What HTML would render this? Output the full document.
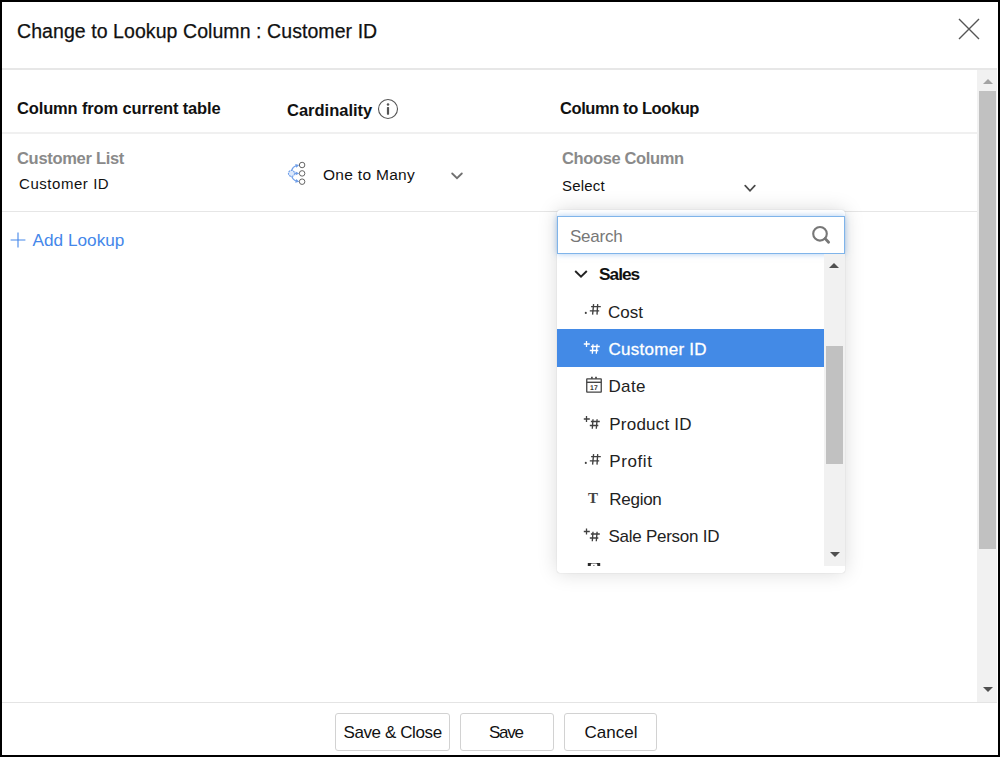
<!DOCTYPE html>
<html><head><meta charset="utf-8">
<style>
*{box-sizing:border-box;margin:0;padding:0}
html,body{width:1000px;height:757px;overflow:hidden;background:#fff;font-family:"Liberation Sans",sans-serif;color:#111}
.abs{position:absolute}
#frame{position:absolute;left:0;top:0;width:1000px;height:757px;border:2px solid #000;z-index:50;pointer-events:none}
.t{position:absolute;white-space:nowrap;line-height:1;transform-origin:0 50%}
.hl{position:absolute;background:#e9e9e9;height:1px}
.btn{position:absolute;top:713px;height:38px;border:1px solid #d2d2d2;border-radius:3px;background:#fff}
.item{position:absolute;left:608.5px;font-size:17px;color:#222;white-space:nowrap;line-height:1}
</style></head><body>
<div id="frame"></div>

<!-- header -->
<div class="t" id="title" style="left:17px;top:21.6px;font-size:19.5px;color:#111;letter-spacing:0.07px;-webkit-text-stroke:0.25px #111">Change to Lookup Column : Customer ID</div>
<svg class="abs" style="left:957px;top:17px" width="24" height="24" viewBox="0 0 24 24"><path d="M2 2 L22 22 M22 2 L2 22" stroke="#555" stroke-width="1.4" fill="none"/></svg>
<div class="hl" style="left:2px;top:68px;width:995px;height:2px;background:#e7e7e7"></div>

<!-- main scrollbar -->
<div class="abs" style="left:977px;top:70px;width:20px;height:632px;background:#f1f1f1"></div>
<div class="abs" style="left:979px;top:91px;width:17px;height:458px;background:#c1c1c1"></div>
<svg class="abs" style="left:982.5px;top:79px" width="10" height="6"><path d="M0 5 L5 0 L10 5 Z" fill="#a3a3a3"/></svg>
<svg class="abs" style="left:982.5px;top:687px" width="10" height="6"><path d="M0 0 L5 5 L10 0 Z" fill="#505050"/></svg>

<!-- column headers -->
<div class="t" id="h1" style="left:17px;top:100px;font-size:16.5px;font-weight:bold;color:#111;letter-spacing:-0.15px">Column from current table</div>
<div class="t" id="h2" style="left:287px;top:102px;font-size:16.5px;font-weight:bold;color:#111">Cardinality</div>
<svg class="abs" style="left:376px;top:97px" width="24" height="24" viewBox="0 0 24 24"><circle cx="12" cy="12" r="9.5" fill="none" stroke="#555" stroke-width="1.1"/><rect x="10.9" y="10.1" width="2.2" height="7.6" rx="0.6" fill="#555"/><circle cx="12" cy="7.4" r="1.25" fill="#555"/></svg>
<div class="t" id="h3" style="left:560px;top:100px;font-size:16.5px;font-weight:bold;color:#111;letter-spacing:-0.42px">Column to Lookup</div>
<div class="hl" style="left:2px;top:132px;width:975px;height:2px;background:#f0f0f0"></div>

<!-- row -->
<div class="t" id="r1a" style="left:17px;top:150px;font-size:16.5px;font-weight:bold;color:#8a8a8a;letter-spacing:-0.3px">Customer List</div>
<div class="t" id="r1b" style="left:19px;top:176px;font-size:15px;color:#111;letter-spacing:0.55px">Customer ID</div>

<svg class="abs" style="left:282px;top:158px" width="30" height="32" viewBox="282 158 30 32">
<g fill="none" stroke="#6f9ee8" stroke-width="1.1">
<path d="M291.6 170.6 Q292.6 167 296.5 165.6"/><path d="M294.6 173.4 H297.5"/><path d="M291.6 176.2 Q292.6 179.8 296.5 181.2"/>
</g>
<g fill="#6f9ee8"><path d="M299.3 165.1 L295.2 164 L296.3 167.7 Z"/><path d="M299.3 173.4 L295.6 171.6 L295.6 175.2 Z"/><path d="M299.3 181.7 L295.2 182.8 L296.3 179.1 Z"/></g>
<circle cx="291.5" cy="173.4" r="3.05" fill="#dce9fc" stroke="#6f9ee8" stroke-width="1.1" stroke-dasharray="1.9 0.75"/>
<g fill="#fff" stroke="#5e5e5e" stroke-width="0.95"><circle cx="302.1" cy="165" r="2.75"/><circle cx="302.1" cy="173.4" r="2.75"/><circle cx="302.1" cy="181.7" r="2.75"/></g>
</svg>
<div class="t" id="r2" style="left:323px;top:167px;font-size:15.5px;color:#111;letter-spacing:0.3px">One to Many</div>
<svg class="abs" style="left:451px;top:172.2px" width="12" height="8" viewBox="0 0 12 8"><path d="M1.2 1.5 L6 6.2 L10.8 1.5" fill="none" stroke="#707070" stroke-width="1.8" stroke-linecap="round"/></svg>

<div class="t" id="r3a" style="left:562px;top:150px;font-size:16.5px;font-weight:bold;color:#8a8a8a;letter-spacing:-0.37px">Choose Column</div>
<div class="t" id="r3b" style="left:562px;top:177.5px;font-size:15px;color:#111;letter-spacing:0.2px">Select</div>
<svg class="abs" style="left:744px;top:183.7px" width="12" height="9" viewBox="0 0 12 9"><path d="M1.2 1.6 L6 6.8 L10.8 1.6" fill="none" stroke="#4a4a4a" stroke-width="1.7" stroke-linecap="round"/></svg>

<div class="hl" style="left:2px;top:211px;width:975px;background:#e6e6e6"></div>

<!-- add lookup -->
<svg class="abs" style="left:10.3px;top:231.7px" width="16" height="16" viewBox="0 0 16 16"><path d="M8 0.6 V15.4 M0.6 8 H15.4" stroke="#4487ea" stroke-width="1.1"/></svg>
<div class="t" id="add" style="left:32.6px;top:231.8px;font-size:17.2px;color:#4487ea">Add Lookup</div>

<!-- dropdown -->
<div class="abs" id="dd" style="left:557px;top:210px;width:288px;height:363px;background:#fff;border-radius:3px;box-shadow:0 0 20px rgba(0,0,0,0.15),0 0 1px rgba(0,0,0,0.25)"></div>
<div class="abs" style="left:557px;top:216px;width:288px;height:38px;border:1px solid #7fb4ea;border-radius:0;background:#fff;box-shadow:0 0 6px rgba(100,160,230,0.55)"></div>
<div class="t" id="srch" style="left:570px;top:227.6px;font-size:17px;color:#777;letter-spacing:-0.23px">Search</div>
<svg class="abs" style="left:808px;top:222px" width="26" height="26" viewBox="808 222 26 26"><circle cx="820" cy="233.8" r="6.8" fill="none" stroke="#777" stroke-width="2.1"/><path d="M825.2 238.6 L828.6 242.3" stroke="#777" stroke-width="2.8" stroke-linecap="round"/></svg>

<!-- dd scrollbar -->
<div class="abs" style="left:824px;top:254px;width:21px;height:312px;background:#f1f1f1"></div>
<div class="abs" style="left:826px;top:346px;width:17px;height:118px;background:#c1c1c1"></div>
<svg class="abs" style="left:829.3px;top:263px" width="10" height="6"><path d="M0 5 L5 0 L10 5 Z" fill="#505050"/></svg>
<svg class="abs" style="left:829.7px;top:552px" width="10" height="6"><path d="M0 0 L5 5 L10 0 Z" fill="#505050"/></svg>

<!-- list -->
<div class="abs" style="left:557px;top:329px;width:267px;height:37.5px;background:#438ae6"></div>
<svg class="abs" style="left:573px;top:268.5px" width="16" height="10" viewBox="0 0 16 10"><path d="M2.2 2 L8 7.7 L13.8 2" fill="none" stroke="#222" stroke-width="1.9"/></svg>
<div class="item" id="i0" style="left:599px;top:265.5px;font-weight:bold;color:#111;font-size:17.3px;letter-spacing:-1px">Sales</div>
<div class="item" id="i1" style="top:303.5px;left:608px">Cost</div>
<div class="item" id="i2" style="top:340.7px;color:#fff;-webkit-text-stroke:0.3px #fff;letter-spacing:0.27px">Customer ID</div>
<div class="item" id="i3" style="top:378.3px;left:608.4px;letter-spacing:0.4px">Date</div>
<div class="item" id="i4" style="top:415.8px;left:609.3px;letter-spacing:0.22px">Product ID</div>
<div class="item" id="i5" style="top:453.3px;left:609.3px;letter-spacing:0.6px">Profit</div>
<div class="item" id="i6" style="top:490.7px;left:609.3px;letter-spacing:-0.27px">Region</div>
<div class="item" id="i7" style="top:528.3px;letter-spacing:-0.26px">Sale Person ID</div>
<svg class="abs" style="left:557px;top:254px" width="267" height="312" viewBox="557 254 267 312"><defs><clipPath id="clipb"><rect x="557" y="254" width="267" height="312"/></clipPath></defs><circle cx="585.8" cy="312.9" r="1.05" fill="#404040"/><path d="M593.6 304.1 L592.6 314.6 M597.7 304.1 L597 314.6 M591.1 306.6 H600.8 M589.8 310.9 H599.2" stroke="#404040" stroke-width="1.35" fill="none"/><path d="M586.5 341.1 V346.9 M583.8 344.0 H589.8" stroke="#fff" stroke-width="1.3" fill="none"/><path d="M593 344.3 L592.3 353.7 M597.1 344.3 L596.3 353.7 M590.9 346.5 H599.8 M589.8 350.5 H598.3" stroke="#fff" stroke-width="1.35" fill="none"/><rect x="586.75" y="378.85" width="14.5" height="13.3" rx="0.3" fill="none" stroke="#444" stroke-width="1.3"/><path d="M586.7 382.3 H601.3" stroke="#444" stroke-width="1.4"/><path d="M591.9 376.75 V378.85 M596 376.75 V378.85" stroke="#444" stroke-width="1.7"/><text x="593.9" y="389.95" font-family="Liberation Sans, sans-serif" font-weight="bold" font-size="6.8" text-anchor="middle" fill="#333" text-rendering="geometricPrecision">17</text><path d="M586.5 416.1 V421.9 M583.8 419.0 H589.8" stroke="#404040" stroke-width="1.3" fill="none"/><path d="M593 419.3 L592.3 428.7 M597.1 419.3 L596.3 428.7 M590.9 421.5 H599.8 M589.8 425.5 H598.3" stroke="#404040" stroke-width="1.35" fill="none"/><circle cx="585.8" cy="462.9" r="1.05" fill="#404040"/><path d="M593.6 454.1 L592.6 464.6 M597.7 454.1 L597 464.6 M591.1 456.6 H600.8 M589.8 460.9 H599.2" stroke="#404040" stroke-width="1.35" fill="none"/><path d="M586.5 528.6 V534.4 M583.8 531.5 H589.8" stroke="#404040" stroke-width="1.3" fill="none"/><path d="M593 531.8 L592.3 541.2 M597.1 531.8 L596.3 541.2 M590.9 534 H599.8 M589.8 538 H598.3" stroke="#404040" stroke-width="1.35" fill="none"/><text x="593" y="503.2" font-family="Liberation Serif, serif" font-weight="bold" font-size="15" text-anchor="middle" fill="#444">T</text><path d="M587.8 563 H600.2 V566 H597.3 V564.6 Q597.2 563.5 596 563.5 H592 Q590.9 563.5 590.8 564.6 V566 H587.8 Z" fill="#2a2a2a"/><ellipse cx="593.9" cy="565.5" rx="0.9" ry="0.45" fill="#555"/></svg>

<!-- footer -->
<div class="hl" style="left:2px;top:702px;width:995px;background:#e4e4e4"></div>
<div class="btn" style="left:335px;width:115px"></div>
<div class="btn" style="left:460px;width:93.5px"></div>
<div class="btn" style="left:564px;width:93px"></div>
<div class="t" id="b1" style="left:343.5px;top:723.5px;font-size:17px;letter-spacing:-0.4px">Save &amp; Close</div>
<div class="t" id="b2" style="left:489px;top:723.5px;font-size:17px;letter-spacing:-1.25px">Save</div>
<div class="t" id="b3" style="left:584.5px;top:723.5px;font-size:17px">Cancel</div>
</body></html>
